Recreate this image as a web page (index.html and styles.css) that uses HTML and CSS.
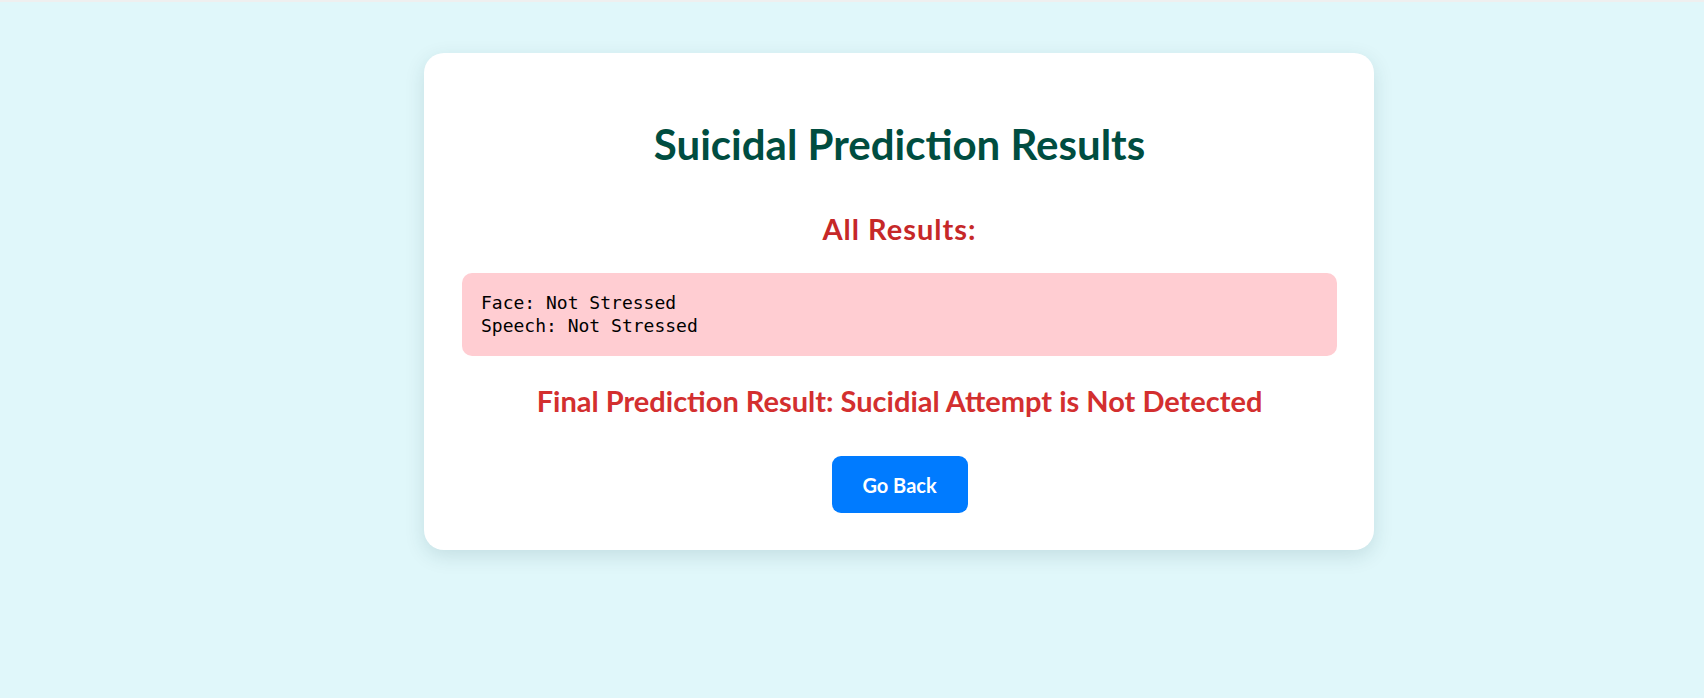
FILE: index.html
```html
<!DOCTYPE html>
<html lang="en">
<head>
<meta charset="utf-8">
<title>Suicidal Prediction Results</title>
<link rel="stylesheet" href="styles.css">
</head>
<body>
<div class="page">
  <div class="card">
    <h1 class="title">Suicidal Prediction Results</h1>
    <h2 class="subtitle">All Results:</h2>
    <pre class="results">Face: Not Stressed
Speech: Not Stressed</pre>
    <h2 class="final">Final Prediction Result: Sucidial Attempt is Not Detected</h2>
    <div class="actions">
      <a class="btn" href="#">Go Back</a>
    </div>
  </div>
</div>
</body>
</html>
```

FILE: styles.css
```css
html, body {
  margin: 0;
  padding: 0;
}
body {
  background: #e0f7fa;
  border-top: 2px solid #efefef;
  font-family: "Lato", "Open Sans", sans-serif;
  height: 696px;
  overflow: hidden;
}
.page {
  padding: 51px 0 0 424px;
}
.card {
  width: 950px;
  box-sizing: border-box;
  background: #ffffff;
  border-radius: 20px;
  box-shadow: 0 6px 20px rgba(0, 60, 70, 0.13);
  padding: 66px 37px 37px 38px;
  text-align: center;
}
.title {
  margin: 0;
  font-size: 42px;
  line-height: 50px;
  font-weight: 700;
  color: #004d40;
}
.subtitle {
  margin: 43px 0 0;
  font-size: 29px;
  line-height: 34px;
  font-weight: 700;
  letter-spacing: 1px;
  color: #c62828;
}
.results {
  margin: 27px 0 0;
  background: #ffcdd2;
  border-radius: 10px;
  padding: 18px 19px 19px;
  text-align: left;
  font-family: "DejaVu Sans Mono", monospace;
  font-size: 18px;
  line-height: 23px;
  color: #000;
}
.final {
  margin: 27px 0 0;
  font-size: 29px;
  line-height: 35px;
  font-weight: 700;
  color: #d32f2f;
}
.actions {
  margin-top: 38px;
  display: flex;
  justify-content: center;
}
.btn {
  display: flex;
  align-items: center;
  justify-content: center;
  height: 57px;
  width: 136px;
  box-sizing: border-box;
  background: #007bff;
  color: #ffffff;
  border-radius: 9px;
  font-size: 20px;
  font-weight: 700;
  text-decoration: none;
}
```
